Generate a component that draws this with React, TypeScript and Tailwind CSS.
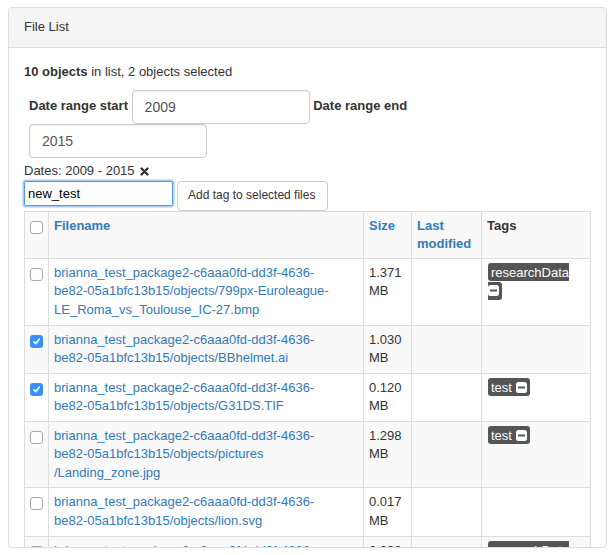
import React from "react";

type Row = {
  checked: boolean;
  name: string[];
  size: string;
  tag?: string;
  wrapTag?: boolean;
  striped: boolean;
};

const rows: Row[] = [
  {
    checked: false,
    name: [
      "brianna_test_package2-c6aaa0fd-dd3f-4636-",
      "be82-05a1bfc13b15/objects/799px-Euroleague-",
      "LE_Roma_vs_Toulouse_IC-27.bmp",
    ],
    size: "1.371",
    tag: "researchData",
    wrapTag: true,
    striped: false,
  },
  {
    checked: true,
    name: ["brianna_test_package2-c6aaa0fd-dd3f-4636-", "be82-05a1bfc13b15/objects/BBhelmet.ai"],
    size: "1.030",
    striped: true,
  },
  {
    checked: true,
    name: ["brianna_test_package2-c6aaa0fd-dd3f-4636-", "be82-05a1bfc13b15/objects/G31DS.TIF"],
    size: "0.120",
    tag: "test",
    striped: false,
  },
  {
    checked: false,
    name: [
      "brianna_test_package2-c6aaa0fd-dd3f-4636-",
      "be82-05a1bfc13b15/objects/pictures",
      "/Landing_zone.jpg",
    ],
    size: "1.298",
    tag: "test",
    striped: true,
  },
  {
    checked: false,
    name: ["brianna_test_package2-c6aaa0fd-dd3f-4636-", "be82-05a1bfc13b15/objects/lion.svg"],
    size: "0.017",
    striped: false,
  },
  {
    checked: false,
    name: ["brianna_test_package2-c6aaa0fd-dd3f-4636-", "be82-05a1bfc13b15/objects/notes.txt"],
    size: "0.002",
    tag: "researchData",
    striped: true,
  },
];

function Checkbox({ checked }: { checked: boolean }) {
  if (checked) {
    return (
      <span className="mt-[4px] flex h-[13px] w-[13px] items-center justify-center rounded-[3px] bg-[#3b8ff6]">
        <svg width="9" height="9" viewBox="0 0 9 9">
          <path d="M1.8 4.8 L3.7 6.7 L7.2 2.2" fill="none" stroke="#fff" strokeWidth="1.6" strokeLinecap="round" strokeLinejoin="round" />
        </svg>
      </span>
    );
  }
  return <span className="mt-[4px] block h-[13px] w-[13px] rounded-[3px] border border-[#a9a9a9] bg-white" />;
}

function MinusIcon() {
  return (
    <svg width="11" height="11" viewBox="0 0 11 11" className="inline-block align-[-1px]">
      <rect x="0" y="0" width="11" height="11" rx="2.5" fill="#fff" />
      <rect x="2" y="4.5" width="7" height="2" fill="#555" />
    </svg>
  );
}

function Tag({ label, wrap }: { label: string; wrap?: boolean }) {
  return (
    <span className="rounded-[3px] bg-[#555] px-[3px] py-[1.5px] text-white">
      {label}
      {wrap ? <br /> : " "}
      <MinusIcon />
    </span>
  );
}

const cell = "border border-[#ddd] p-[5px] text-left align-top";

export default function App() {
  return (
    <div className="h-[555px] w-[613px] bg-white pl-[8px] pt-[7px] text-[13px] leading-[1.42857] text-[#333] [font-family:'Liberation_Sans',Arial,sans-serif]">
      <div className="h-[541px] w-[599px] overflow-hidden rounded-[4px] border border-[#ddd]">
        <div className="border-b border-[#ddd] bg-[#f5f5f5] px-[15px] py-[10px]">File List</div>
        <div className="px-[15px] pt-[15px]">
          <p className="mb-[9px]">
            <b>10 objects</b> in list, 2 objects selected
          </p>
          <div className="pl-[5px]">
            <label className="font-bold">Date range start</label>{" "}
            <input
              readOnly
              value="2009"
              className="h-[34px] w-[178px] rounded-[4px] border border-[#ccc] px-[12px] align-middle text-[14px] text-[#555] shadow-[inset_0_1px_1px_rgba(0,0,0,0.075)] outline-none"
            />{" "}
            <label className="font-bold">Date range end</label>
            <br />
            <input
              readOnly
              value="2015"
              className="h-[34px] w-[178px] rounded-[4px] border border-[#ccc] px-[12px] align-middle text-[14px] text-[#555] shadow-[inset_0_1px_1px_rgba(0,0,0,0.075)] outline-none"
            />
          </div>
          <div className="mt-[4px] flex items-center gap-[5px]">
            <span>Dates: 2009 - 2015</span>
            <svg width="9" height="9" viewBox="0 0 9 9">
              <path d="M1.5 1.5 L7.5 7.5 M7.5 1.5 L1.5 7.5" stroke="#333" strokeWidth="2.4" strokeLinecap="round" />
            </svg>
          </div>
          <div className="flex items-start gap-[4px]">
            <input
              readOnly
              value="new_test"
              className="h-[25px] w-[149px] rounded-[2px] border border-[#5b9bd8] px-[3px] text-[13px] text-black shadow-[0_0_0_1.5px_#a9cbee] outline-none"
            />
            <button className="h-[30px] w-[151px] rounded-[4px] border border-[#ccc] bg-white px-[10px] text-left text-[12px] text-[#333]">
              Add tag to selected files
            </button>
          </div>
          <table className="w-[566px] table-fixed border-collapse border border-[#ddd]">
            <colgroup>
              <col className="w-[24px]" />
              <col className="w-[315px]" />
              <col className="w-[48px]" />
              <col className="w-[70px]" />
              <col className="w-[109px]" />
            </colgroup>
            <thead>
              <tr className="bg-[#f9f9f9]">
                <th className={`${cell} pb-[4px]`}>
                  <Checkbox checked={false} />
                </th>
                <th className={`${cell} pb-[4px] text-[#337ab7]`}>Filename</th>
                <th className={`${cell} pb-[4px] text-[#337ab7]`}>Size</th>
                <th className={`${cell} pb-[4px] text-[#337ab7]`}>
                  Last
                  <br />
                  modified
                </th>
                <th className={`${cell} pb-[4px]`}>Tags</th>
              </tr>
            </thead>
            <tbody>
              {rows.map((row, i) => (
                <tr key={i} className={row.striped ? "bg-[#f9f9f9]" : "bg-white"}>
                  <td className={cell}>
                    <Checkbox checked={row.checked} />
                  </td>
                  <td className={`${cell} text-[#337ab7]`}>
                    {row.name.map((line, j) => (
                      <span key={j} className="block whitespace-nowrap">
                        {line}
                      </span>
                    ))}
                  </td>
                  <td className={cell}>
                    {row.size}
                    <br />
                    MB
                  </td>
                  <td className={cell} />
                  <td className={`${cell} overflow-hidden pl-[6px]`}>
                    {row.tag && <Tag label={row.tag} wrap={row.wrapTag} />}
                  </td>
                </tr>
              ))}
            </tbody>
          </table>
        </div>
      </div>
    </div>
  );
}
